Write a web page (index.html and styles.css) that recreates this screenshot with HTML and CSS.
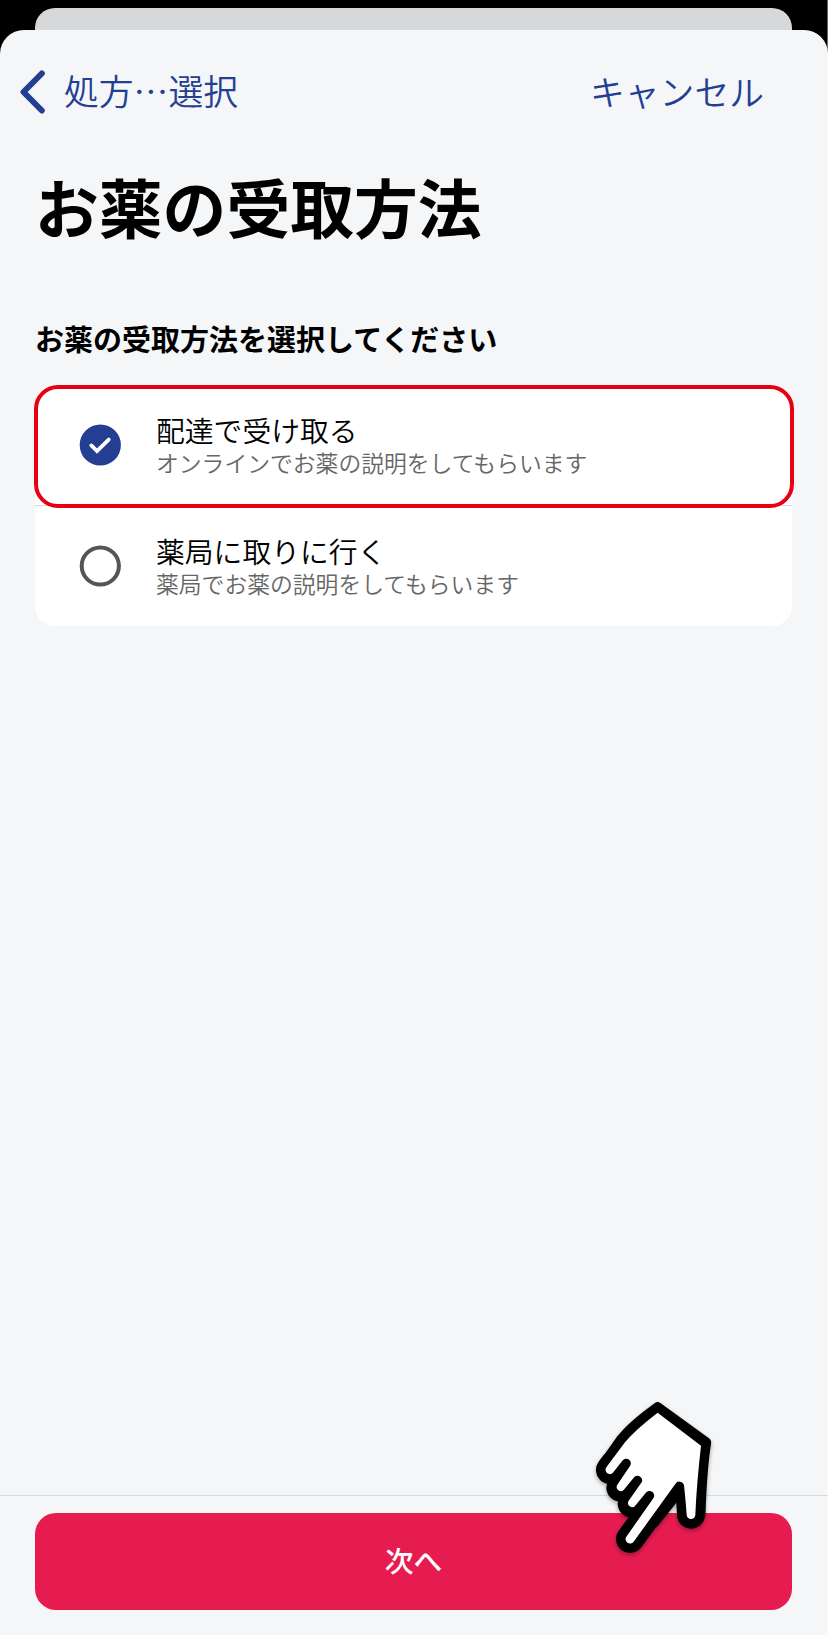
FILE: index.html
```html
<!DOCTYPE html>
<html lang="ja">
<head>
<meta charset="utf-8">
<title>お薬の受取方法</title>
<link rel="stylesheet" href="styles.css">
</head>
<body>
<div class="screen">
  <div class="sheet-behind"></div>
  <div class="sheet">
    <header class="nav">
      <div class="nav-back">
        <svg class="chevron" width="28" height="46" viewBox="0 0 28 46"><path d="M23.8 4.5 5.5 23 23.8 41.5" fill="none" stroke="#243f92" stroke-width="6" stroke-linecap="round" stroke-linejoin="round"/></svg>
        <span class="nav-text">処方…選択</span>
      </div>
      <span class="nav-text nav-cancel">キャンセル</span>
    </header>
    <main class="content">
      <h1 class="title">お薬の受取方法</h1>
      <h2 class="prompt">お薬の受取方法を選択してください</h2>
      <div class="options">
        <div class="option selected">
          <svg class="radio" width="42" height="42" viewBox="0 0 42 42"><circle cx="21.3" cy="21" r="20.6" fill="#243f92"/><path d="M12.3 21.4 18 27 29.7 15.6" fill="none" stroke="#fff" stroke-width="3.8" stroke-linecap="round" stroke-linejoin="miter"/></svg>
          <div class="labels">
            <div class="label">配達で受け取る</div>
            <div class="detail">オンラインでお薬の説明をしてもらいます</div>
          </div>
        </div>
        <div class="option">
          <svg class="radio" width="42" height="42" viewBox="0 0 42 42"><circle cx="21.3" cy="21" r="18.6" fill="#fff" stroke="#555" stroke-width="4"/></svg>
          <div class="labels">
            <div class="label">薬局に取りに行く</div>
            <div class="detail">薬局でお薬の説明をしてもらいます</div>
          </div>
        </div>
      </div>
    </main>
    <footer class="footer">
      <div class="next">次へ</div>
    </footer>
  </div>
  <svg class="hand" width="150" height="180" viewBox="0 0 450 540">
    <path d="M233 52 378 157Q365 240 361 374L300 300 220 400 200 330 72 222 123 150Q155 108 233 52Z" fill="#000" stroke="#000" stroke-width="31" stroke-linejoin="round"/>
    <path d="M90 240 100 226M121 293 150 253M155 341 185 300M150 447 240 325M333 374 330 320" stroke="#000" stroke-width="84" stroke-linecap="round"/>
    <path d="M233 68 363 167Q350 280 346 374A13 13 0 0 1 320 374Q317 330 312 286A14 14 0 0 0 286 282L161 455A13 13 0 0 1 139 440L220 325A14 14 0 0 0 197 309L165 348A12.5 12.5 0 0 1 145 334L186 275A14 14 0 0 0 163 261L131 300A12.5 12.5 0 0 1 111 286L150 228A14 14 0 0 0 127 212L100 247A12.5 12.5 0 0 1 79 232L135 157Q165 120 233 68Z" fill="#fff"/>
  </svg>
</div>
</body>
</html>
```
FILE: styles.css
```css
* { box-sizing: border-box; }
body {
  margin: 0;
  background: #000;
  font-family: "Noto Sans CJK JP", sans-serif;
}
.screen {
  position: relative;
  display: flex;
  flex-direction: column;
  width: 828px;
  height: 1635px;
  padding-top: 8px;
  overflow: hidden;
}
.screen::after {
  content: "";
  position: absolute;
  inset: 0 0 0 auto;
  width: 1px;
  background: rgba(255, 255, 255, .42);
}
.sheet-behind {
  height: 22px;
  margin: 0 36px 0 35px;
  background: #d7d8da;
  border-radius: 20px 20px 0 0;
}
.sheet {
  flex: 1;
  display: flex;
  flex-direction: column;
  background: #f4f6f8;
  border-radius: 24px 24px 0 0;
}
.nav {
  display: flex;
  justify-content: space-between;
  align-items: center;
  height: 124px;
  padding: 0 64px 0 18px;
}
.nav-back { display: flex; align-items: center; gap: 18px; }
.nav-text {
  margin-top: -4px;
  font-size: 34.8px;
  line-height: 50px;
  font-weight: 350;
  color: #243f92;
}
.nav-cancel { margin-top: -2px; }
.chevron, .radio { display: block; flex: none; }
.content { flex: 1; padding: 0 36px 0 35px; }
.title {
  margin: 0;
  font-size: 63.8px;
  line-height: 102px;
  font-weight: 700;
}
.prompt {
  margin: 58px 0 0;
  font-size: 29px;
  line-height: 48px;
  font-weight: 700;
}
.options {
  margin-top: 23px;
  background: #fff;
  border-radius: 20px;
}
.option {
  position: relative;
  display: flex;
  align-items: center;
  gap: 35px;
  height: 120px;
  padding-left: 44px;
}
.option + .option { height: 121px; border-top: 1px solid #d8d9db; }
.selected { z-index: 1; }
.selected::after {
  content: "";
  position: absolute;
  inset: 0 -2px -3px -1px;
  border: 4px solid #e60012;
  border-radius: 24px;
}
.labels { margin-top: -1px; }
.label {
  font-size: 28.8px;
  line-height: 36px;
  font-weight: 350;
  color: #000;
}
.detail {
  font-size: 22.8px;
  line-height: 30px;
  font-weight: 350;
  color: #666;
}
.footer {
  height: 140px;
  padding: 17px 36px 0 35px;
  border-top: 1px solid #d7d9db;
}
.next {
  height: 97px;
  border-radius: 21px;
  background: #e61c51;
  color: #fff;
  font-size: 28.8px;
  line-height: 94px;
  font-weight: 500;
  text-align: center;
}
.hand {
  position: absolute;
  left: 580px;
  top: 1390px;
  filter: drop-shadow(0 2px 2px rgba(0, 0, 0, .35));
}
```
